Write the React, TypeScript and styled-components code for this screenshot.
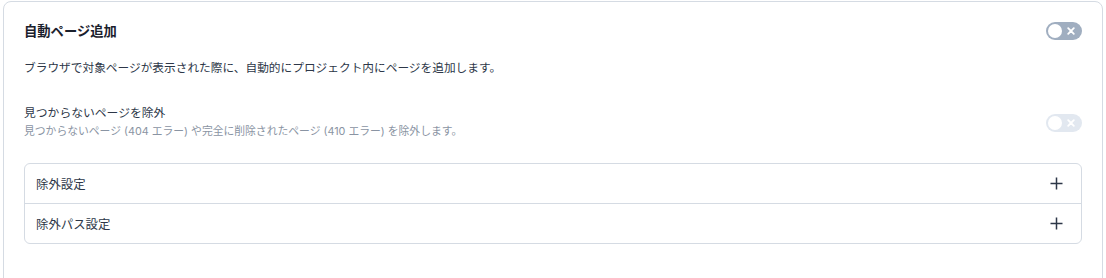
import React from 'react';
import styled, { createGlobalStyle } from 'styled-components';

const GlobalStyle = createGlobalStyle`
  html, body {
    margin: 0;
    padding: 0;
    background: #ffffff;
  }
  body {
    font-family: "Inter", "Noto Sans CJK JP", sans-serif;
    color: #2d3748;
  }
`;

const Card = styled.section`
  margin: 1px 3px 0;
  min-height: 320px;
  border: 1px solid #d5dbe3;
  border-radius: 8px;
  padding: 19px 20px 20px;
  box-sizing: border-box;
`;

const Header = styled.div`
  display: flex;
  align-items: center;
  justify-content: space-between;
  height: 20px;
`;

const Title = styled.h2`
  margin: 0;
  font-size: 13.3px;
  font-weight: 700;
  color: #1a202c;
  line-height: 20px;
`;

const Description = styled.p`
  margin: 17px 0 0;
  font-size: 11.7px;
  line-height: 20px;
  color: #2d3748;
`;

const OptionRow = styled.div`
  display: flex;
  align-items: center;
  justify-content: space-between;
  margin-top: 26px;
`;

const OptionText = styled.div`
  display: flex;
  flex-direction: column;
`;

const OptionLabel = styled.span`
  font-size: 11.8px;
  line-height: 18px;
  color: #2d3748;
`;

const OptionHint = styled.span`
  margin-top: 1px;
  font-size: 10.8px;
  line-height: 18px;
  color: #8a94a3;
`;

const Track = styled.button<{ $disabled?: boolean }>`
  position: relative;
  display: flex;
  align-items: center;
  justify-content: flex-end;
  width: 36px;
  height: 18px;
  margin: 0;
  padding: 0 7px 0 0;
  border: none;
  border-radius: 9px;
  background: ${(p) => (p.$disabled ? '#e2e8f0' : '#a0aec0')};
  cursor: ${(p) => (p.$disabled ? 'not-allowed' : 'pointer')};
  flex-shrink: 0;
`;

const Knob = styled.span`
  position: absolute;
  left: 2px;
  top: 2px;
  width: 14px;
  height: 14px;
  border-radius: 50%;
  background: #ffffff;
`;

const Accordion = styled.div`
  margin-top: 22px;
  border: 1px solid #d5dbe3;
  border-radius: 6px;
`;

const AccordionItem = styled.div`
  display: flex;
  align-items: center;
  justify-content: space-between;
  height: 39px;
  padding: 0 18px 0 11px;
  font-size: 12.4px;
  color: #2d3748;

  & + & {
    border-top: 1px solid #d5dbe3;
  }
`;

const Toggle = ({ disabled }: { disabled?: boolean }) => (
  <Track $disabled={disabled} aria-pressed={false}>
    <Knob />
    <svg width="8" height="8" viewBox="0 0 8 8">
      <path d="M1.2 1.2 L6.8 6.8 M6.8 1.2 L1.2 6.8" stroke="#ffffff" strokeWidth="1.8" strokeLinecap="round" />
    </svg>
  </Track>
);

const PlusIcon = () => (
  <svg width="13" height="13" viewBox="0 0 13 13">
    <path d="M6.5 0.5 V12.5 M0.5 6.5 H12.5" stroke="#2d3748" strokeWidth="1.5" />
  </svg>
);

export default function App() {
  return (
    <>
      <GlobalStyle />
      <Card>
        <Header>
          <Title>自動ページ追加</Title>
          <Toggle />
        </Header>
        <Description>
          ブラウザで対象ページが表示された際に、自動的にプロジェクト内にページを追加します。
        </Description>
        <OptionRow>
          <OptionText>
            <OptionLabel>見つからないページを除外</OptionLabel>
            <OptionHint>
              見つからないページ (404 エラー) や完全に削除されたページ (410 エラー) を除外します。
            </OptionHint>
          </OptionText>
          <Toggle disabled />
        </OptionRow>
        <Accordion>
          <AccordionItem>
            除外設定
            <PlusIcon />
          </AccordionItem>
          <AccordionItem>
            除外パス設定
            <PlusIcon />
          </AccordionItem>
        </Accordion>
      </Card>
    </>
  );
}
